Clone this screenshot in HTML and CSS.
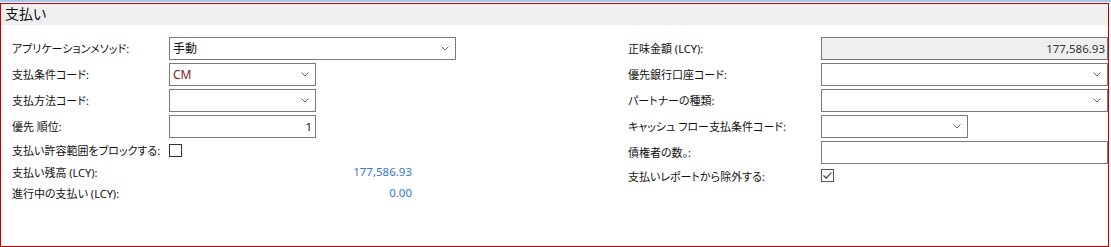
FILE: index.html
```html
<!DOCTYPE html>
<html lang="ja">
<head>
<meta charset="UTF-8">
<title>支払い</title>
<link rel="stylesheet" href="styles.css">
</head>
<body>
<div class="topline"></div>
<!-- 支払いパネル -->
<div class="panel">
    <div class="panel-head">支払い</div>
    <div class="content">
        <!-- 左側 -->
        <div class="col left">
            <div class="row">
                <div class="label">アプリケーションメソッド:</div>
                <div class="field select wide"><span>手動</span><svg class="chev" width="8" height="5" viewBox="0 0 8 5"><polyline points="0.5,0.5 4,4 7.5,0.5"/></svg></div>
            </div>
            <div class="row">
                <div class="label">支払条件コード:</div>
                <div class="field select"><span class="code">CM</span><svg class="chev" width="8" height="5" viewBox="0 0 8 5"><polyline points="0.5,0.5 4,4 7.5,0.5"/></svg></div>
            </div>
            <div class="row">
                <div class="label">支払方法コード:</div>
                <div class="field select"><span></span><svg class="chev" width="8" height="5" viewBox="0 0 8 5"><polyline points="0.5,0.5 4,4 7.5,0.5"/></svg></div>
            </div>
            <div class="row">
                <div class="label">優先 順位:</div>
                <div class="field num">1</div>
            </div>
            <div class="row check-row">
                <div class="label">支払い許容範囲をブロックする:</div>
                <div class="checkbox"></div>
            </div>
            <div class="row text">
                <div class="label">支払い残高 (LCY):</div>
                <div class="value">177,586.93</div>
            </div>
            <div class="row text">
                <div class="label">進行中の支払い (LCY):</div>
                <div class="value">0.00</div>
            </div>
        </div>
        <!-- 右側 -->
        <div class="col right">
            <div class="row">
                <div class="label">正味金額 (LCY):</div>
                <div class="field wide readonly num">177,586.93</div>
            </div>
            <div class="row">
                <div class="label">優先銀行口座コード:</div>
                <div class="field select wide"><span></span><svg class="chev" width="8" height="5" viewBox="0 0 8 5"><polyline points="0.5,0.5 4,4 7.5,0.5"/></svg></div>
            </div>
            <div class="row">
                <div class="label">パートナーの種類:</div>
                <div class="field select wide"><span></span><svg class="chev" width="8" height="5" viewBox="0 0 8 5"><polyline points="0.5,0.5 4,4 7.5,0.5"/></svg></div>
            </div>
            <div class="row">
                <div class="label">キャッシュ フロー支払条件コード:</div>
                <div class="field select"><span></span><svg class="chev" width="8" height="5" viewBox="0 0 8 5"><polyline points="0.5,0.5 4,4 7.5,0.5"/></svg></div>
            </div>
            <div class="row">
                <div class="label">債権者の数。:</div>
                <div class="field wide"></div>
            </div>
            <div class="row text">
                <div class="label">支払いレポートから除外する:</div>
                <div class="checkbox checked"><svg width="11" height="11" viewBox="0 0 11 11"><polyline points="1.5,5.5 4.2,8.2 9.5,2.5"/></svg></div>
            </div>
        </div>
    </div>
</div>
</body>
</html>
```

FILE: styles.css
```css
body {
    margin: 0;
    padding: 0;
    background: #fff;
    color: #111;
    font-family: "Noto Sans", "Noto Sans CJK JP", sans-serif;
    font-size: 11px;
    font-feature-settings: "palt";
}
.topline {
    height: 2px;
    background-color: #a9c8f0;
    margin-bottom: 1px;
}
/* パネル */
.panel {
    width: 1107px;
    height: 242px;
    border: 1px solid #c00000;
}
.panel-head {
    height: 21px;
    line-height: 20px;
    padding-left: 4px;
    background-color: #efefef;
    font-size: 14px;
    color: #111;
}
.content {
    display: flex;
    padding: 10px 0 0 11px;
}
.col.left {
    width: 616px;
}
.col.right {
    flex: 1;
}
.row {
    display: flex;
    align-items: center;
    height: 26px;
}
.row.check-row {
    height: 22px;
}
.row.text {
    height: 21px;
}
.left .label {
    width: 157px;
}
.right .label {
    width: 193px;
}
.label {
    flex-shrink: 0;
    white-space: nowrap;
}
/* 入力欄 */
.field {
    box-sizing: border-box;
    width: 147px;
    height: 23px;
    border: 1px solid #7a7a7a;
    background: #fff;
    padding: 0 3px;
    display: flex;
    align-items: center;
    font-size: 12px;
}
.field.wide {
    width: 287px;
}
.field.select {
    justify-content: space-between;
    padding-right: 6px;
}
.field.num {
    justify-content: flex-end;
    padding-right: 3px;
    font-size: 11.5px;
}
.field.readonly {
    background-color: #efefef;
    color: #333;
    padding-right: 2px;
}
.code {
    color: #7a1e1e;
}
.chev polyline {
    fill: none;
    stroke: #666;
    stroke-width: 1;
}
.checkbox {
    box-sizing: border-box;
    width: 13px;
    height: 13px;
    border: 1px solid #333;
    background: #fff;
    display: flex;
    align-items: center;
    justify-content: center;
}
.checkbox.checked {
    border-color: #555;
}
.checkbox svg polyline {
    fill: none;
    stroke: #333;
    stroke-width: 1.1;
}
.value {
    width: 243px;
    text-align: right;
    color: #3476d4;
    font-size: 11.5px;
}
```
